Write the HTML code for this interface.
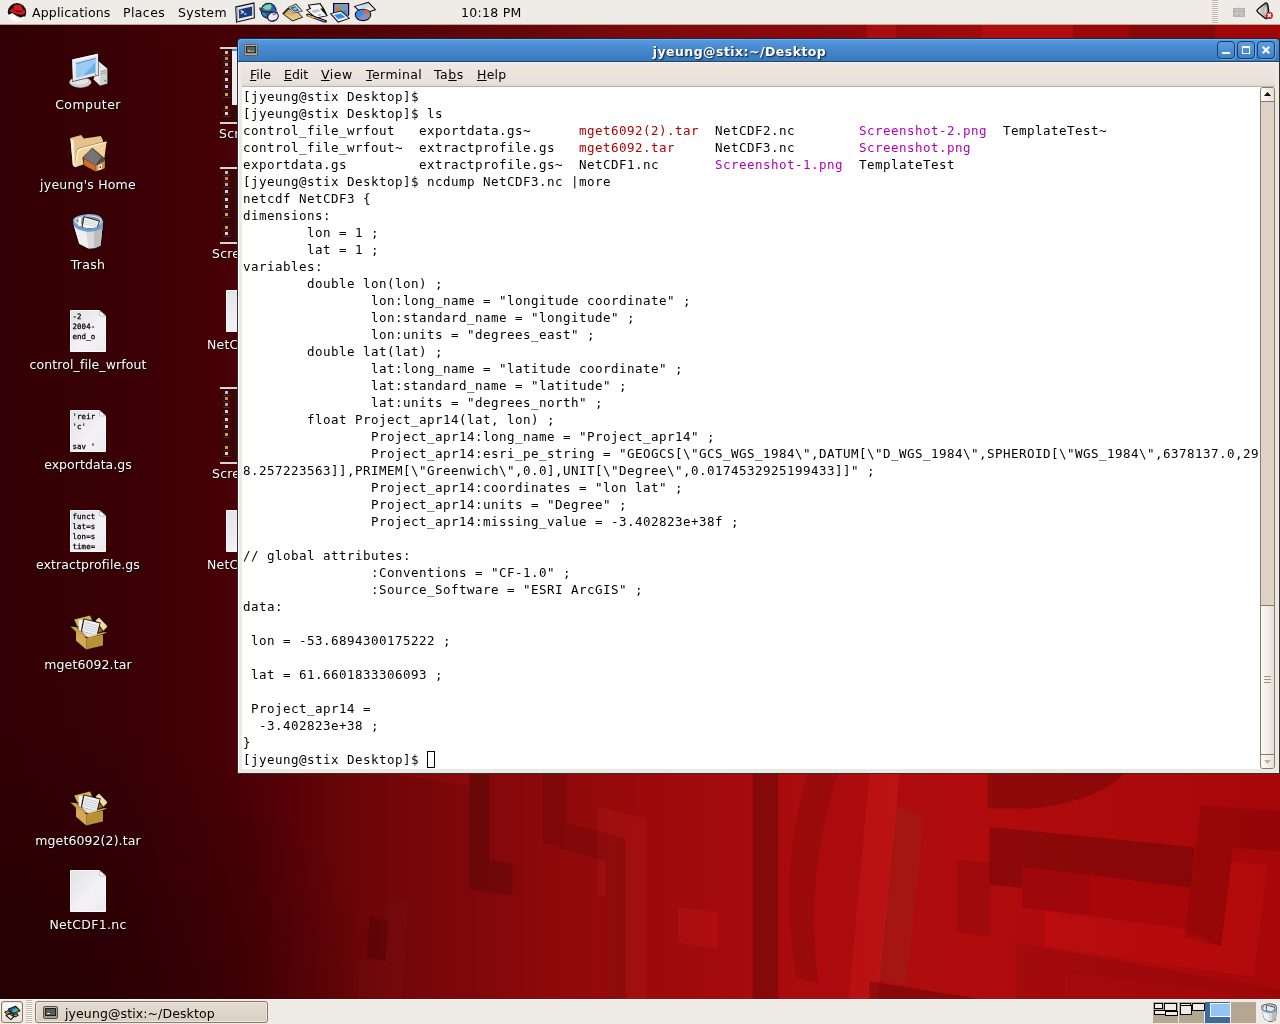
<!DOCTYPE html>
<html>
<head>
<meta charset="utf-8">
<title>jyeung@stix:~/Desktop</title>
<style>
html,body{margin:0;padding:0;}
body{width:1280px;height:1024px;overflow:hidden;position:relative;background:#7a0608;font-family:"DejaVu Sans","Liberation Sans",sans-serif;font-size:12.5px;color:#000;}
#wall{position:absolute;left:0;top:0;width:1280px;height:1024px;}
/* panels */
#top{position:absolute;left:0;top:0;width:1280px;height:24px;background:#efebe7;border-bottom:1px solid #b9a994;}
#bot{position:absolute;left:0;top:999px;width:1280px;height:25px;background:#efebe7;border-top:1px solid #fbfaf9;box-sizing:border-box;}
.pt{will-change:transform;position:absolute;top:5px;line-height:16px;white-space:nowrap;}
.tb{position:absolute;box-sizing:border-box;border:1px solid #8a7a66;border-radius:3px;background:linear-gradient(#e4dcd2,#dfd6ca 50%,#d9cfc2);box-shadow:inset 0 0 0 1px #ece6de;}
#grip{position:absolute;left:26px;top:0;width:6px;height:24px;background:repeating-linear-gradient(#c9baa6 0,#c9baa6 1px,#fbf9f7 1px,#fbf9f7 2px);}
#ws{position:absolute;left:1153px;top:2px;width:104px;height:21px;}
#ws i{position:absolute;display:block;box-sizing:border-box;}
#ws .wc{top:0;width:25px;height:21px;background:#b5a691;}
#ws .cur3{background:#3c6a9c;}
#ws .ww{background:#efebe7;border:1px solid #000;}
#ws .wa{background:#94c4f4;border:1px solid #fff;}
#grip2{position:absolute;left:1212px;top:0;width:6px;height:24px;background:repeating-linear-gradient(#c4b5a2 0,#c4b5a2 1px,#faf8f6 1px,#faf8f6 2px);}
/* desktop icons */
.lbl{will-change:transform;position:absolute;letter-spacing:0.2px;color:#fff;text-align:center;white-space:nowrap;line-height:16px;text-shadow:1px 1px 1px #000;transform:translateX(-50%);}
.ico{position:absolute;}
.l2{transform:none;text-align:left;}
.thumb{width:96px;height:77px;background:#3c0508;overflow:hidden;}
.thumb i{position:absolute;display:block;}
.thumb .tp{left:0;top:0;width:96px;height:2px;background:#d8d4cf;}
.thumb .bp{left:0;top:75px;width:96px;height:2px;background:#d8d4cf;}
.thumb .tw{left:12px;top:2px;width:80px;height:54px;background:#eeedf2;border-top:2px solid #4a86c8;}
.thumb .ti{left:5px;width:3px;height:3px;opacity:.9;}
.thumb .tl{left:3px;width:7px;height:1px;background:#fff;opacity:.13;}
/* window */
#win{position:absolute;left:237px;top:38px;width:1043px;height:736px;background:#ece9e4;box-sizing:border-box;border:1px solid #33302b;border-top:none;border-radius:5px 5px 0 0;}
#win:before{content:"";position:absolute;left:0;top:24px;width:1px;height:710px;background:#fff;}
#tbar{position:absolute;left:-1px;top:0;width:1043px;height:24px;box-sizing:border-box;border:1px solid #18283c;border-bottom:1px solid #1f426d;border-radius:4px 4px 0 0;background:linear-gradient(#5b9ce0 0%,#4b8dd3 30%,#4283c9 65%,#3a79bd 100%);box-shadow:inset 1px 1px 0 #6fb2f7;}
#ttl{will-change:transform;position:absolute;left:0;top:5px;width:1003px;text-align:center;color:#fff;font-weight:bold;font-size:12.5px;line-height:16px;letter-spacing:0.45px;text-shadow:1px 1px 0 #1c385c,1px 1px 2px #1c385c;}
.wb{position:absolute;top:2px;width:16px;height:16px;border:1px solid #1e3c62;border-radius:4px;background:linear-gradient(#5d9ee0,#4182c8);box-shadow:1px 1px 0 #64a4e8;}
.wb i{position:absolute;display:block;box-sizing:border-box;}
#menu{position:absolute;left:4px;top:24px;width:1033px;height:24px;border-bottom:1px solid #c2b29c;border-top:1px solid #fbf8f5;box-sizing:content-box;height:23px;background:linear-gradient(#ede7e4 0px,#ede6e3 5px,#eee4dc 6px,#ede3da 13px,#e5e3df 14px,#e5e3df 20px,#e5dcd0 21px,#e5dcd0 23px);}
.mi{will-change:transform;position:absolute;top:4px;line-height:16px;letter-spacing:0.25px;white-space:nowrap;}
.mi u{text-decoration:underline;text-underline-offset:1px;}
#term{position:absolute;left:4px;top:49px;width:1018px;height:682px;background:#fff;overflow:hidden;}
#term pre{will-change:transform;position:absolute;left:1px;top:1px;margin:0;font-family:"DejaVu Sans Mono","Liberation Mono",monospace;font-size:12.5px;letter-spacing:0.4744px;line-height:17px;color:#000;white-space:pre;}
.cur{display:inline-block;width:8px;height:17px;box-sizing:border-box;border:1px solid #000;vertical-align:top;letter-spacing:0;}
.r{color:#b00000;}
.m{color:#b000b8;}
#sb{position:absolute;left:1022px;top:49px;width:15px;height:682px;background:#ded3c6;border:1px solid #8a7a66;box-sizing:border-box;border-radius:3px;overflow:hidden;}
#sb .b{position:absolute;left:0;width:13px;height:13px;background:linear-gradient(90deg,#fdfbfa,#f1ece6 60%,#e6e0d8);}
#sb .th{position:absolute;left:0;top:517px;width:13px;height:150px;border-top:1px solid #8a7a66;border-bottom:1px solid #8a7a66;background:linear-gradient(90deg,#fbf9f7,#f2eeea 50%,#e4dfd7);box-sizing:border-box;}
</style>
</head>
<body>
<svg id="wall" width="1280" height="1024" viewBox="0 0 1280 1024">
<defs>
<linearGradient id="wg" x1="0" y1="0" x2="1280" y2="0" gradientUnits="userSpaceOnUse">
<stop offset="0" stop-color="#320004"/>
<stop offset="0.10" stop-color="#390005"/>
<stop offset="0.19" stop-color="#490006"/>
<stop offset="0.28" stop-color="#6c0507"/>
<stop offset="0.36" stop-color="#7e0709"/>
<stop offset="0.44" stop-color="#90090b"/>
<stop offset="0.52" stop-color="#9e0a0c"/>
<stop offset="0.62" stop-color="#aa0b0d"/>
<stop offset="0.75" stop-color="#b00c0e"/>
<stop offset="0.90" stop-color="#ac090b"/>
<stop offset="1" stop-color="#a60709"/>
</linearGradient>
<linearGradient id="tg" x1="0" y1="0" x2="1280" y2="0" gradientUnits="userSpaceOnUse">
<stop offset="0" stop-color="#300004"/>
<stop offset="0.19" stop-color="#460006"/>
<stop offset="0.31" stop-color="#530407"/>
<stop offset="0.42" stop-color="#680709"/>
<stop offset="0.50" stop-color="#7c0a0c"/>
<stop offset="0.60" stop-color="#88090b"/>
<stop offset="0.675" stop-color="#90090b"/>
<stop offset="0.70" stop-color="#960a0c"/>
<stop offset="0.77" stop-color="#a00a0c"/>
<stop offset="1" stop-color="#a00709"/>
</linearGradient>
<radialGradient id="vg" cx="60" cy="1060" r="340" gradientUnits="userSpaceOnUse">
<stop offset="0" stop-color="#000" stop-opacity="0.30"/>
<stop offset="0.45" stop-color="#000" stop-opacity="0.20"/>
<stop offset="1" stop-color="#000" stop-opacity="0"/>
</radialGradient>
</defs>
<rect x="0" y="0" width="1280" height="1024" fill="url(#wg)"/>
<rect x="0" y="700" width="420" height="324" fill="url(#vg)"/>
<rect x="0" y="24" width="1280" height="16" fill="url(#tg)"/>
<rect x="867" y="25" width="29" height="14" fill="#a80e10"/>
<rect x="982" y="25" width="91" height="14" fill="#b00d0f"/>
<rect x="1073" y="25" width="56" height="14" fill="#9c0709"/>
<rect x="1129" y="25" width="86" height="14" fill="#860808"/>
<rect x="1215" y="25" width="65" height="14" fill="#a00709"/>
<polygon points="396.4,770.0 469.5,770.0 469.5,785.4 396.4,774.9" fill="#ff3020" fill-opacity="0.08"/>
<polygon points="469.5,770.0 489.8,770.0 489.8,860.2 512.2,863.4 512.2,895.1 469.5,889.8" fill="#1a0800" fill-opacity="0.2"/>
<polygon points="597.5,806.6 646.2,818.8 646.2,1001.6 605.6,1001.6 605.6,895.9 597.5,895.9" fill="#ff5030" fill-opacity="0.07"/>
<polygon points="542.7,770.0 567.0,770.0 567.0,822.8 625.9,839.1 625.9,1001.6 605.6,1001.6 605.6,861.4 542.7,843.1" fill="#000000" fill-opacity="0.1"/>
<polygon points="677.9,907.3 717.3,912.2 717.3,948.8 677.9,942.7" fill="#ff3030" fill-opacity="0.13"/>
<polygon points="370.0,916.2 388.3,921.1 385.4,960.9 366.8,956.9" fill="#000000" fill-opacity="0.14"/>
<polygon points="388.3,895.9 408.6,898.0 402.5,997.5 357.8,997.5 359.8,960.9 386.2,960.9" fill="#ffffff" fill-opacity="0.015"/>
<polygon points="752.7,770.0 778.3,770.0 778.3,1001.6 752.7,1001.6" fill="#000000" fill-opacity="0.2"/>
<path d="M808.8,770.0 Q776.2,875.6 796.6,977.2 L818.9,983.3 Q802.7,875.6 839.2,770.0 Z" fill="#000" fill-opacity="0.09"/>
<polygon points="869.7,770.0 900.2,770.0 877.8,1001.6 848.6,1001.6" fill="#ff3030" fill-opacity="0.16"/>
<polygon points="896.1,806.6 924.5,814.7 906.2,985.3 877.8,979.2" fill="#804020" fill-opacity="0.18"/>
<polygon points="869.7,981.2 975.3,998.3 975.3,1001.6 869.7,1001.6" fill="#000000" fill-opacity="0.22"/>
<path d="M987.5,770.0 L987.5,808.6 L1036.2,808.6 Q1105.3,798.4 1127.7,770.0 Z" fill="#000" fill-opacity="0.18"/>
<polygon points="1015.9,942.7 1280.0,989.4 1280.0,1001.6 1015.9,1001.6" fill="#000000" fill-opacity="0.07"/>
<polygon points="1064.7,973.1 1280.0,997.5 1280.0,1001.6 1064.7,1001.6" fill="#ff3030" fill-opacity="0.05"/>
<polygon points="989.5,826.9 1194.7,847.2 1190.6,887.8 1022.0,887.8 989.5,885.0" fill="#000000" fill-opacity="0.2"/>
<polygon points="956.2,859.4 990.3,862.6 990.3,936.6 956.2,932.5" fill="#000000" fill-opacity="0.09"/>
<polygon points="1022.0,866.7 1089.1,874.8 1089.1,915.4 1022.0,908.1" fill="#a0070c" fill-opacity="1"/>
<polygon points="1089.1,874.8 1190.6,887.8 1186.6,928.4 1089.1,915.4" fill="#a80709" fill-opacity="1"/>
<polygon points="1044.4,910.2 1184.5,929.2 1221.1,946.7 1231.2,861.4 1267.8,865.5 1253.6,976.4 1044.4,946.7" fill="#ff2020" fill-opacity="0.13"/>
<polygon points="1200.8,805.8 1280.0,810.6 1280.0,851.2 1233.3,848.0 1221.1,946.7 1184.5,937.4" fill="#000000" fill-opacity="0.1"/>
</svg>
<div id="desk">
<svg class="ico" style="left:64px;top:48px" width="48" height="48" viewBox="0 0 48 48">
<ellipse cx="16.5" cy="35" rx="11.5" ry="5.8" fill="#1a0a0a" opacity=".6"/>
<ellipse cx="16.3" cy="34.3" rx="11" ry="5.4" fill="#cfcfd1"/>
<ellipse cx="15.5" cy="33" rx="9" ry="3.6" fill="#e4e4e6"/>
<path d="M29 31.5 L35.5 38.5 L43.8 36.3 L43.8 20.2 L35.3 11.5 L33 13 Z" fill="#111" opacity=".7"/>
<path d="M34.3 13 L43.2 20.6 L43.2 35.6 L36 37.6 L29.5 31.5 Z" fill="#e9e9ea"/>
<path d="M36 22.5 L43.2 20.6 L43.2 35.6 L36 37.6 Z" fill="#d0d0d2"/>
<path d="M36.8 24 L42.5 22.5 M36.8 26 L42.5 24.5" stroke="#9a9a9c" stroke-width=".8"/>
<circle cx="41.3" cy="32.8" r="1" fill="#3cae3c"/>
<path d="M7.5 11 L34.6 4.8 L35 27.6 L8.3 34 Z" fill="#111" opacity=".75"/>
<path d="M8.3 11.6 L34 5.8 L34.3 27 L9 33 Z" fill="#e6e6e8"/>
<path d="M8.3 11.6 L34 5.8 L34 7.4 L9.6 13 L10 32.8 L9 33 Z" fill="#f8f8f9"/>
<path d="M12.2 15.6 L31.5 10.4 L31.6 24.6 L12.5 29.8 Z" fill="#6aaee8"/>
<path d="M12.2 15.6 L31.5 10.4 L31.5 14 L18 29 L12.5 29.8 Z" fill="#a5d2f5" opacity=".8"/>
<path d="M12.2 15.6 L31.5 10.4" stroke="#3c78b8" stroke-width=".8"/>
<circle cx="31.4" cy="26.3" r=".8" fill="#3cae3c"/>
</svg>
<svg class="ico" style="left:64px;top:128px" width="48" height="48" viewBox="0 0 48 48">
<path d="M5.5 9.5 L17.5 6 L20.2 9.5 L37.5 7 L39.8 12 L40 30 L10.8 40.2 L8 37.5 Z" fill="#1a0808" opacity=".8"/>
<path d="M6.4 10 L17.2 7 L19.8 10.4 L37 7.9 L39 12.4 L39 29 L11 39.2 L8.8 37 Z" fill="#e6c189"/>
<path d="M6.4 10 L8.8 37 L11 39.2 L9.5 12 Z" fill="#fbf0dc"/>
<path d="M11 39.2 L12.2 24 Q12.6 20.6 15.5 19.8 L43.3 12.6 L41 30.4 Z" fill="#1a0808" opacity=".35"/>
<path d="M11.2 39 L12.8 24.4 Q13.2 21.4 16 20.6 L42.6 13.4 L40.4 30 Z" fill="#f2d29b"/>
<path d="M11.2 39 L12.8 24.4 Q13.2 21.4 16 20.6 L42.6 13.4 L42.4 14.6 L16.6 21.8 Q14.2 22.6 13.9 25 L12.4 38.6 Z" fill="#fff6e6"/>
<g transform="translate(-1.6,-3.8)"><path d="M20 33.2 L30 23.6 L43.6 35.4 L43 44.6 L33.2 48 L21.2 41.4 Z" fill="#180808" opacity=".8"/>
<path d="M21.6 34.6 L33.2 41.2 L33.2 47.2 L21.8 41 Z" fill="#cf6d2a"/>
<path d="M33.2 41.2 L42.6 36 L42.4 44 L33.2 47.2 Z" fill="#e08843"/>
<path d="M20.6 33.2 L30 24.4 L39.5 32.6 L33.2 41.4 Z" fill="#757575"/>
<path d="M30 24.4 L43.2 35.6 L42.8 36.6 L33.2 41.4 L39 33 Z" fill="#4c4c4c"/>
<path d="M36 41.4 L39.6 39.8 L39.6 44.8 L36 46.2 Z" fill="#f4f4f4"/>
<rect x="37.3" y="42" width="1.2" height="2" fill="#222"/></g>
</svg>
<svg class="ico" style="left:64px;top:208px" width="48" height="48" viewBox="0 0 48 48">
<path d="M8.2 12 Q8 7 24 5 Q39 4.4 40 13 L37.6 38 Q30 42.6 24 41.6 L14.4 36.6 Z" fill="#140808" opacity=".8"/>
<path d="M10 18 L15.2 35.8 L24.4 40.6 Q30 41.2 36.6 37.4 L38.6 18 Z" fill="#d9d9db"/>
<path d="M10 18 L15.2 35.8 L24.4 40.6 L22 20 Z" fill="#efeff0"/>
<path d="M30 21 L38.6 18 L36.6 37.4 Q33 39.6 30 40.4 Z" fill="#bdbdc0"/>
<path d="M9 12.4 Q9 7.6 24 6 Q38 5.6 39.2 13.4 L38.8 19.6 Q32 24.4 22 23.4 Q12 21.6 9.8 17.6 Z" fill="#7ea6d2"/>
<path d="M10.4 12.4 Q11 8.8 24 7.4 Q36.6 7.2 37.8 13.2 Q37 17.6 24 18.8 Q12 17.6 10.4 12.4 Z" fill="#e8e8ea"/>
<path d="M11.6 12.6 Q13 9.6 24 8.6 Q35.6 8.6 36.6 13.2 Q35 16.4 24 17.6 Q13.6 16.6 11.6 12.6 Z" fill="#8a8a8e"/>
<path d="M14.6 10 L17.6 9.6 L16.6 18.4 L14 17.4 Z" fill="#fafafa"/>
<path d="M19.6 8 L36 13 L33.4 19.6 Q26 21.4 17.6 19.4 Z" fill="#1a1a1a"/>
<path d="M20.4 9.2 L35 13.6 L32.6 19.4 Q26 20.8 18.6 19.2 Z" fill="#f6f6f7"/>
<path d="M21 12 L33 15 M20.4 14 L32.4 16.8 M20 16 L31.6 18.4" stroke="#c6c6ca" stroke-width=".7"/>
<path d="M9.8 17.6 Q12 21.6 22 23.4 Q32 24.4 38.8 19.6 L39 16.6 Q32 21 22 20.4 Q12 18.6 9.4 14.6 Z" fill="#6f9bcb"/>
</svg>
<svg class="ico" style="left:70px;top:310px;will-change:transform" width="37" height="43" viewBox="0 0 37 43">
<path d="M0.5 0.5 L30 0.5 L36.5 6.5 L36.5 42.5 L0.5 42.5 Z" fill="#2a1010" opacity=".55"/>
<defs><linearGradient id="dga" x1="0" y1="0" x2="1" y2="1"><stop offset="0" stop-color="#e2e1e3"/><stop offset=".6" stop-color="#f4f2f5"/><stop offset="1" stop-color="#ebeaec"/></linearGradient></defs>
<path d="M0.5 0.5 L29.5 0.5 L35.5 6 L35.5 41.5 L0.5 41.5 Z" fill="url(#dga)" stroke="#fbfbfb" stroke-width="1"/>
<path d="M29.5 0.5 L29.5 6 L35.5 6 Z" fill="#fdfdfd" stroke="#b9b9bb" stroke-width=".8"/>
<g font-family="DejaVu Sans Mono, Liberation Mono, monospace" font-size="7.4" fill="#000" letter-spacing=".15" stroke="#000" stroke-width=".25"><text x="2.4" y="9.2">-2</text><text x="2.4" y="19.2">2004-</text><text x="2.4" y="29.2">end_o</text></g>
</svg>
<svg class="ico" style="left:70px;top:410px;will-change:transform" width="37" height="43" viewBox="0 0 37 43">
<path d="M0.5 0.5 L30 0.5 L36.5 6.5 L36.5 42.5 L0.5 42.5 Z" fill="#2a1010" opacity=".55"/>
<defs><linearGradient id="dgb" x1="0" y1="0" x2="1" y2="1"><stop offset="0" stop-color="#e2e1e3"/><stop offset=".6" stop-color="#f4f2f5"/><stop offset="1" stop-color="#ebeaec"/></linearGradient></defs>
<path d="M0.5 0.5 L29.5 0.5 L35.5 6 L35.5 41.5 L0.5 41.5 Z" fill="url(#dgb)" stroke="#fbfbfb" stroke-width="1"/>
<path d="M29.5 0.5 L29.5 6 L35.5 6 Z" fill="#fdfdfd" stroke="#b9b9bb" stroke-width=".8"/>
<g font-family="DejaVu Sans Mono, Liberation Mono, monospace" font-size="7.4" fill="#000" letter-spacing=".15" stroke="#000" stroke-width=".25"><text x="2.4" y="9.2">&#39;reir</text><text x="2.4" y="19.2">&#39;c&#39;</text><text x="2.4" y="39.2">sav &#39;</text></g>
</svg>
<svg class="ico" style="left:70px;top:510px;will-change:transform" width="37" height="43" viewBox="0 0 37 43">
<path d="M0.5 0.5 L30 0.5 L36.5 6.5 L36.5 42.5 L0.5 42.5 Z" fill="#2a1010" opacity=".55"/>
<defs><linearGradient id="dgc" x1="0" y1="0" x2="1" y2="1"><stop offset="0" stop-color="#e2e1e3"/><stop offset=".6" stop-color="#f4f2f5"/><stop offset="1" stop-color="#ebeaec"/></linearGradient></defs>
<path d="M0.5 0.5 L29.5 0.5 L35.5 6 L35.5 41.5 L0.5 41.5 Z" fill="url(#dgc)" stroke="#fbfbfb" stroke-width="1"/>
<path d="M29.5 0.5 L29.5 6 L35.5 6 Z" fill="#fdfdfd" stroke="#b9b9bb" stroke-width=".8"/>
<g font-family="DejaVu Sans Mono, Liberation Mono, monospace" font-size="7.4" fill="#000" letter-spacing=".15" stroke="#000" stroke-width=".25"><text x="2.4" y="9.2">funct</text><text x="2.4" y="19.2">lat=s</text><text x="2.4" y="29.2">lon=s</text><text x="2.4" y="39.2">time=</text></g>
</svg>
<svg class="ico" style="left:59px;top:605px" width="48" height="48" viewBox="0 0 48 48">
<path d="M10.4 20.6 L14.6 14 L31.4 9.4 L33.6 14 L40 11 L49.6 21.6 L45 26.4 L50 27.4 L44.6 30 L44.6 41.4 L27 45.6 L16.4 36.4 L16.4 27 Z" fill="#140606" opacity=".8"/>
<path d="M15.2 14.6 L31 10.4 L33 15 L18.4 21.6 Z" fill="#d6ad5c"/>
<path d="M36.6 15.4 L40 12.4 L48.6 21.4 L44.4 25.8 Z" fill="#f4d9a0"/>
<path d="M18 22 L33 15 L44 26 L28 32 Z" fill="#8a6a28"/>
<path d="M19.8 15 L23.4 14.6 L22 27 L19.6 25 Z" fill="#f4f4f5"/>
<path d="M24.6 13.4 L41.6 17.4 L38.4 30.4 L22 26.4 Z" fill="#161616"/>
<path d="M25.4 14.6 L40.6 18.2 L37.6 30 L23 26.2 Z" fill="#f2f2f4"/>
<path d="M26 17.6 L39 20.8 M25.6 19.8 L38.4 23 M25 22 L38 25.2 M24.4 24.2 L37.4 27.4" stroke="#c2c2c8" stroke-width=".8"/>
<path d="M11.4 21.4 L17 22 L28.4 31.6 L22.4 32 Z" fill="#c79f46"/>
<path d="M17 26.6 L27.2 33 L27.2 44.6 L17 35.8 Z" fill="#d4aa52"/>
<path d="M27.2 33 L44 29.4 L44 40.6 L27.2 44.6 Z" fill="#b7913a"/>
<path d="M27.2 31.8 L44.6 27.2 L49 27.6 L30 32.8 Z" fill="#dcb660"/>
<path d="M23 26.2 L37.6 30 L28 32 Z" fill="#e2e2e6"/>
</svg>
<svg class="ico" style="left:59px;top:781px" width="48" height="48" viewBox="0 0 48 48">
<path d="M10.4 20.6 L14.6 14 L31.4 9.4 L33.6 14 L40 11 L49.6 21.6 L45 26.4 L50 27.4 L44.6 30 L44.6 41.4 L27 45.6 L16.4 36.4 L16.4 27 Z" fill="#140606" opacity=".8"/>
<path d="M15.2 14.6 L31 10.4 L33 15 L18.4 21.6 Z" fill="#d6ad5c"/>
<path d="M36.6 15.4 L40 12.4 L48.6 21.4 L44.4 25.8 Z" fill="#f4d9a0"/>
<path d="M18 22 L33 15 L44 26 L28 32 Z" fill="#8a6a28"/>
<path d="M19.8 15 L23.4 14.6 L22 27 L19.6 25 Z" fill="#f4f4f5"/>
<path d="M24.6 13.4 L41.6 17.4 L38.4 30.4 L22 26.4 Z" fill="#161616"/>
<path d="M25.4 14.6 L40.6 18.2 L37.6 30 L23 26.2 Z" fill="#f2f2f4"/>
<path d="M26 17.6 L39 20.8 M25.6 19.8 L38.4 23 M25 22 L38 25.2 M24.4 24.2 L37.4 27.4" stroke="#c2c2c8" stroke-width=".8"/>
<path d="M11.4 21.4 L17 22 L28.4 31.6 L22.4 32 Z" fill="#c79f46"/>
<path d="M17 26.6 L27.2 33 L27.2 44.6 L17 35.8 Z" fill="#d4aa52"/>
<path d="M27.2 33 L44 29.4 L44 40.6 L27.2 44.6 Z" fill="#b7913a"/>
<path d="M27.2 31.8 L44.6 27.2 L49 27.6 L30 32.8 Z" fill="#dcb660"/>
<path d="M23 26.2 L37.6 30 L28 32 Z" fill="#e2e2e6"/>
</svg>
<svg class="ico" style="left:70px;top:870px;will-change:transform" width="37" height="43" viewBox="0 0 37 43">
<path d="M0.5 0.5 L30 0.5 L36.5 6.5 L36.5 42.5 L0.5 42.5 Z" fill="#2a1010" opacity=".55"/>
<defs><linearGradient id="dgd" x1="0" y1="0" x2="1" y2="1"><stop offset="0" stop-color="#e2e1e3"/><stop offset=".6" stop-color="#f4f2f5"/><stop offset="1" stop-color="#ebeaec"/></linearGradient></defs>
<path d="M0.5 0.5 L29.5 0.5 L35.5 6 L35.5 41.5 L0.5 41.5 Z" fill="url(#dgd)" stroke="#fbfbfb" stroke-width="1"/>
<path d="M29.5 0.5 L29.5 6 L35.5 6 Z" fill="#fdfdfd" stroke="#b9b9bb" stroke-width=".8"/>
<g font-family="DejaVu Sans Mono, Liberation Mono, monospace" font-size="7.4" fill="#000" letter-spacing=".15" stroke="#000" stroke-width=".25"></g>
</svg>
<div class="lbl" style="left:88px;top:97px;letter-spacing:0.45px">Computer</div>
<div class="lbl" style="left:88px;top:177px;letter-spacing:0.2px">jyeung&#39;s Home</div>
<div class="lbl" style="left:88px;top:257px;letter-spacing:0.3px">Trash</div>
<div class="lbl" style="left:88px;top:357px;letter-spacing:0.1px">control_file_wrfout</div>
<div class="lbl" style="left:88px;top:457px;letter-spacing:0.05px">exportdata.gs</div>
<div class="lbl" style="left:88px;top:557px;letter-spacing:0.1px">extractprofile.gs</div>
<div class="lbl" style="left:88px;top:657px;letter-spacing:0.1px">mget6092.tar</div>
<div class="lbl" style="left:88px;top:833px;letter-spacing:0.1px">mget6092(2).tar</div>
<div class="lbl" style="left:88px;top:917px;letter-spacing:0.3px">NetCDF1.nc</div>
<div class="ico thumb" style="left:220px;top:47px"><i class="tp"></i><i class="bp"></i><i class="tw"></i><i class="ti" style="top:4px;background:#c4d8ec"></i><i class="tl" style="top:8px"></i><i class="ti" style="top:10px;background:#d89858"></i><i class="tl" style="top:14px"></i><i class="ti" style="top:16px;background:#b4bcc8"></i><i class="tl" style="top:20px"></i><i class="ti" style="top:23px;background:#e4e4e8"></i><i class="tl" style="top:27px"></i><i class="ti" style="top:31px;background:#ececf0"></i><i class="tl" style="top:35px"></i><i class="ti" style="top:38px;background:#e4e4e8"></i><i class="tl" style="top:42px"></i><i class="ti" style="top:46px;background:#d8b050"></i><i class="tl" style="top:50px"></i><i class="ti" style="top:59px;background:#d8b050"></i><i class="tl" style="top:63px"></i><i class="ti" style="top:65px;background:#ececf0"></i><i class="tl" style="top:69px"></i></div>
<div class="ico thumb" style="left:220px;top:167px"><i class="tp"></i><i class="bp"></i><i class="ti" style="top:4px;background:#c4d8ec"></i><i class="tl" style="top:8px"></i><i class="ti" style="top:10px;background:#d89858"></i><i class="tl" style="top:14px"></i><i class="ti" style="top:16px;background:#b4bcc8"></i><i class="tl" style="top:20px"></i><i class="ti" style="top:23px;background:#e4e4e8"></i><i class="tl" style="top:27px"></i><i class="ti" style="top:31px;background:#ececf0"></i><i class="tl" style="top:35px"></i><i class="ti" style="top:38px;background:#e4e4e8"></i><i class="tl" style="top:42px"></i><i class="ti" style="top:46px;background:#d8b050"></i><i class="tl" style="top:50px"></i><i class="ti" style="top:59px;background:#d8b050"></i><i class="tl" style="top:63px"></i><i class="ti" style="top:65px;background:#ececf0"></i><i class="tl" style="top:69px"></i></div>
<div class="ico thumb" style="left:220px;top:387px"><i class="tp"></i><i class="bp"></i><i class="ti" style="top:4px;background:#c4d8ec"></i><i class="tl" style="top:8px"></i><i class="ti" style="top:10px;background:#d89858"></i><i class="tl" style="top:14px"></i><i class="ti" style="top:16px;background:#b4bcc8"></i><i class="tl" style="top:20px"></i><i class="ti" style="top:23px;background:#e4e4e8"></i><i class="tl" style="top:27px"></i><i class="ti" style="top:31px;background:#ececf0"></i><i class="tl" style="top:35px"></i><i class="ti" style="top:38px;background:#e4e4e8"></i><i class="tl" style="top:42px"></i><i class="ti" style="top:46px;background:#d8b050"></i><i class="tl" style="top:50px"></i><i class="ti" style="top:59px;background:#d8b050"></i><i class="tl" style="top:63px"></i><i class="ti" style="top:65px;background:#ececf0"></i><i class="tl" style="top:69px"></i></div>
<svg class="ico" style="left:226px;top:290px;will-change:transform" width="37" height="43" viewBox="0 0 37 43">
<path d="M0.5 0.5 L30 0.5 L36.5 6.5 L36.5 42.5 L0.5 42.5 Z" fill="#2a1010" opacity=".55"/>
<defs><linearGradient id="dge" x1="0" y1="0" x2="1" y2="1"><stop offset="0" stop-color="#e2e1e3"/><stop offset=".6" stop-color="#f4f2f5"/><stop offset="1" stop-color="#ebeaec"/></linearGradient></defs>
<path d="M0.5 0.5 L29.5 0.5 L35.5 6 L35.5 41.5 L0.5 41.5 Z" fill="url(#dge)" stroke="#fbfbfb" stroke-width="1"/>
<path d="M29.5 0.5 L29.5 6 L35.5 6 Z" fill="#fdfdfd" stroke="#b9b9bb" stroke-width=".8"/>
<g font-family="DejaVu Sans Mono, Liberation Mono, monospace" font-size="7.4" fill="#000" letter-spacing=".15" stroke="#000" stroke-width=".25"></g>
</svg>
<svg class="ico" style="left:226px;top:510px;will-change:transform" width="37" height="43" viewBox="0 0 37 43">
<path d="M0.5 0.5 L30 0.5 L36.5 6.5 L36.5 42.5 L0.5 42.5 Z" fill="#2a1010" opacity=".55"/>
<defs><linearGradient id="dgf" x1="0" y1="0" x2="1" y2="1"><stop offset="0" stop-color="#e2e1e3"/><stop offset=".6" stop-color="#f4f2f5"/><stop offset="1" stop-color="#ebeaec"/></linearGradient></defs>
<path d="M0.5 0.5 L29.5 0.5 L35.5 6 L35.5 41.5 L0.5 41.5 Z" fill="url(#dgf)" stroke="#fbfbfb" stroke-width="1"/>
<path d="M29.5 0.5 L29.5 6 L35.5 6 Z" fill="#fdfdfd" stroke="#b9b9bb" stroke-width=".8"/>
<g font-family="DejaVu Sans Mono, Liberation Mono, monospace" font-size="7.4" fill="#000" letter-spacing=".15" stroke="#000" stroke-width=".25"></g>
</svg>
<div class="lbl l2" style="left:219px;top:126px">Screenshot.png</div>
<div class="lbl l2" style="left:212px;top:246px">Screenshot-1.png</div>
<div class="lbl l2" style="left:207px;top:337px">NetCDF2.nc</div>
<div class="lbl l2" style="left:212px;top:466px">Screenshot-2.png</div>
<div class="lbl l2" style="left:207px;top:557px">NetCDF3.nc</div>
</div>
<!--/desk-->
<div id="top">
<svg class="ico" style="left:7px;top:2px" width="20" height="21" viewBox="0 0 20 21"><defs><clipPath id="lc"><circle cx="10" cy="10.3" r="9.2"/></clipPath></defs><circle cx="10" cy="10.3" r="9.2" fill="#fdfdfd"/><g clip-path="url(#lc)"><path d="M0 0 H20 V14.8 L16.4 14.6 L13.6 15.4 L9 13.4 L5.2 11 L2.4 12.4 L0 12.6 Z" fill="#0c0c0c"/><path d="M2.8 8.6 C3.6 7.4 5.2 6.8 6.2 6.6 C6.4 4.8 7.2 2.6 8.8 2.4 C10 2.4 10.6 3 11.6 3 C12.4 3 13 2.6 13.8 3 C14.8 3.6 15.4 6 15.8 7.4 C17.4 7.8 18.4 8.8 18.2 10.4 C18 12.2 15.2 13 12 12.6 C8.8 12.2 6.6 11 5.6 10.2 C4 10.6 2 10 2.8 8.6 Z" fill="#d4191f"/><path d="M6.6 7 C8.6 8.6 12.4 9.4 15.2 8.6 L15.4 9.6 C12.6 10.6 8.6 9.8 6.4 8 Z" fill="#3c0808"/><path d="M9.4 14 L11.4 14.8 L10.4 15.6 Z M12.4 15.6 L13.8 15.4 L12.6 17 Z" fill="#777"/></g></svg>
<span class="pt" style="left:32px;letter-spacing:.18px">Applications</span>
<span class="pt" style="left:123px;letter-spacing:.4px">Places</span>
<span class="pt" style="left:178px;letter-spacing:.4px">System</span>
<svg class="ico" style="left:230px;top:0" width="150" height="25" viewBox="230 0 150 25">
<!-- terminal -->
<path d="M235.2 6.4 L254.5 2.3 L254.9 18.3 L236 22.8 Z" fill="#0a0a0a"/>
<path d="M236.4 7.4 L253.5 3.7 L253.8 17.4 L237 21.4 Z" fill="#e8e8ea"/>
<path d="M236.4 7.4 L237 21.4 L238.2 21.1 L237.8 8.2 Z" fill="#a8a8ac"/>
<path d="M238.8 9.5 L252.1 6.5 L252.2 15.4 L239.1 18.5 Z" fill="#1a3a82"/>
<path d="M240.6 10.6 L243.4 12 L240.8 13.6 M244 14.2 L246.4 13.7" stroke="#fff" stroke-width="1.1" fill="none"/>
<!-- globe + mouse -->
<circle cx="268.6" cy="10.8" r="8" fill="#0a0a0a"/>
<circle cx="268.6" cy="10.8" r="7.2" fill="#1a62cc"/>
<path d="M262.5 7.4 Q266 3.6 270.8 4.4 Q272.6 7 270 9.6 Q266 11 262.5 7.4 Z" fill="#86d494"/>
<path d="M262 13 Q265 13.4 266.6 16 Q264 16.4 262 13 Z" fill="#58b85c"/>
<path d="M260 7.6 Q259.4 11.4 268 11.6 Q276 11.4 277.4 13" stroke="#222" stroke-width="1.6" fill="none"/>
<path d="M260.4 7.2 Q260 10.6 268 10.8 Q276 10.6 277.8 12.4" stroke="#9a9a9a" stroke-width=".6" fill="none"/>
<ellipse cx="273" cy="16.8" rx="6" ry="4.8" fill="#0a0a0a" transform="rotate(-22 273 16.8)"/>
<ellipse cx="273" cy="16.6" rx="5" ry="3.8" fill="#ececf4" transform="rotate(-22 273 16.6)"/>
<path d="M272 13.6 L276 13 L276 15 L273 15.6 Z" fill="#8a8ad0"/>
<!-- mail -->
<path d="M282.2 13.6 L288.5 7 L296 3.6 L303 11.2 L298.2 12.4 L303 17.4 L292.4 21.4 Z" fill="#0a0a0a" opacity=".85"/>
<path d="M283.4 13.8 L288.6 8.6 L297.4 12.6 L302 17 L292.5 20.4 Z" fill="#d8ae6c" stroke="#111" stroke-width="1.1" stroke-linejoin="round"/>
<path d="M283.4 13.8 L292.6 15.8 L297.4 12.6 L302 17 L292.5 20.4 Z" fill="#e6c284"/>
<path d="M288.4 7.2 L295.8 4.6 L302 11 L294 12.8 Z" fill="#f4f4f4" stroke="#555" stroke-width=".7"/>
<path d="M290 7.6 L295.2 6 L299.4 10.4 L294.2 11.8 Z" fill="#2a5cb0"/>
<ellipse cx="295" cy="8.8" rx="2" ry="1.4" fill="#8ad49a"/>
<!-- writer -->
<path d="M307.8 4.8 L320.4 3 L324.4 9 L327.8 16 L315.6 18.6 L305.8 9.8 L309.4 8.4 Z" fill="#0a0a0a"/>
<path d="M309.2 5.6 L319.8 4.2 L322.6 8.4 L311.6 9.6 Z" fill="#f6f6f6"/>
<path d="M307.4 10 L318.6 7 L326.4 15.4 L316 17.6 Z" fill="#fafafa"/>
<path d="M311 10.6 L318 9 L320.6 11.6 L313.6 13.2 Z" fill="#c2c2c4"/>
<path d="M318 15.2 L321 14.6" stroke="#3a8af0" stroke-width="1"/>
<path d="M306.2 14 L308 13.4 L327 20.4 L326.6 22.4 L324 22.4 L306.6 16 Z" fill="#0a0a0a"/>
<path d="M307.4 14.6 L325.8 21.2 L324.4 21.6 L307.4 15.6 Z" fill="#c8d4f4"/>
<path d="M308 14.8 L314.6 17.2 L314 18.4 L307.6 16 Z" fill="#e8b020"/>
<!-- impress -->
<rect x="333" y="3" width="16.2" height="12.6" fill="#0a0a0a"/>
<rect x="334.2" y="4" width="13.8" height="11" fill="#8e8ecc"/>
<rect x="336.8" y="7.2" width="3" height="4.6" fill="#f06a2c"/>
<rect x="340" y="5.2" width="3" height="6" fill="#4ec46a"/>
<path d="M343.6 10 L346.4 11 L346.4 14 L343.6 13 Z" fill="#2a8af0"/>
<path d="M329.8 13.4 L341.4 10.4 L350.2 18.4 L338 22.8 Z" fill="#0a0a0a"/>
<path d="M331.4 13.8 L341 11.4 L348.6 18.2 L338.4 21.6 Z" fill="#ececec"/>
<path d="M334 15 L341 13.4 L345.2 17.2 L338.2 19 Z" fill="#2a8af0"/>
<!-- calc -->
<path d="M353.6 6.2 L368.6 1.8 L376.4 10 L370 12 L358 10.6 Z" fill="#0a0a0a"/>
<path d="M355.4 6.6 L368.2 3 L374.6 9.6 L369.6 11 L358.6 9.4 Z" fill="#ebebed"/>
<path d="M359 6.8 L368 4.4 M360.4 8.2 L370 5.8" stroke="#a6d0ec" stroke-width=".9"/>
<ellipse cx="363" cy="15" rx="8.2" ry="6.2" fill="#0a0a0a"/>
<ellipse cx="363" cy="14.8" rx="7.2" ry="5.2" fill="#3a8cec"/>
<path d="M363 14.8 L364.4 9.8 Q368.6 10.2 369.8 12.8 Z" fill="#f0642c"/>
<path d="M363 14.8 L369.8 12.8 Q370.2 13.8 370.2 14.6 Z" fill="#4ec46a"/>
<path d="M363 14.8 L370.2 14.6 Q370 19.4 363.4 20 Q359.6 19.8 358 18.4 Z" fill="#8c8cc8"/>
</svg>
<div id="grip2"></div>
<svg class="ico" style="left:1232px;top:5px" width="14" height="14" viewBox="0 0 14 14"><path d="M4 1.8 H9" stroke="#dcd9d5" stroke-width="1"/><rect x="1" y="3" width="12" height="9" fill="#b2b2b2"/><rect x="2" y="4" width="10" height="1" fill="#c4c4c4"/><rect x="3" y="5.5" width="5" height="2" fill="#bdbdbd"/><rect x="8.6" y="5.5" width="2.4" height="2" fill="#c6c8a0"/><rect x="2" y="8" width="10" height="1" fill="#d0d0d0"/><rect x="3.6" y="9.6" width="2.6" height="1.4" fill="#c8c8c8"/><rect x="8" y="9.6" width="2.6" height="1.4" fill="#c8c8c8"/></svg>
<svg class="ico" style="left:1254px;top:1px" width="22" height="22" viewBox="0 0 22 22"><defs><linearGradient id="spk" x1="0" y1="0" x2="1" y2="0"><stop offset="0" stop-color="#f2f2f2"/><stop offset=".55" stop-color="#bcbcbc"/><stop offset="1" stop-color="#6a6a6a"/></linearGradient></defs><path d="M2.8 9.6 Q3 8.4 11.2 2.2 Q13 1.4 13.8 4 Q15.6 10 13.8 16 Q13 18.2 11.4 17.4 Q3.2 11.2 2.8 9.6 Z" fill="url(#spk)" stroke="#0c0c0c" stroke-width="1.3" stroke-linejoin="round"/><ellipse cx="11.6" cy="9.8" rx="1.3" ry="4.6" fill="#ddd" opacity=".8"/><circle cx="15.4" cy="14.4" r="3.5" fill="#c81414"/><circle cx="15" cy="13.8" r="2.4" fill="#e23a30" opacity=".7"/><path d="M13.8 12.8 L17 16 M17 12.8 L13.8 16" stroke="#fff" stroke-width="1.3"/></svg>
<span class="pt" id="clock" style="left:461px;letter-spacing:.28px">10:18 PM</span>
</div>
<div id="bot">
<div class="tb" style="left:1px;top:1px;width:22px;height:22px;background:linear-gradient(#fefdfc,#f3eeea 50%,#e9e1da)"><svg style="position:absolute;left:0;top:0" width="20" height="20" viewBox="2 1002 20 20"><path d="M8.2 1009.2 L15.6 1006.2 L20 1010.8 L12.8 1013.8 Z" fill="#2a62cc" stroke="#111" stroke-width="1.1" stroke-linejoin="round"/><path d="M12.4 1010 L16.4 1008.2 L18.8 1010.8 L13.6 1012.8 Z" fill="#58b868"/><path d="M4.6 1012 L8.2 1010.8 L11.8 1013 L7.1 1014.6 Z" fill="#b48c34" stroke="#111" stroke-width="1" stroke-linejoin="round"/><path d="M12.8 1014.4 L17.5 1013.6 L18.2 1015.5 L14.8 1017 Z" fill="#b48c34" stroke="#111" stroke-width="1" stroke-linejoin="round"/><path d="M6 1015.6 L9.6 1013.8 L13.8 1016.6 L10.9 1019.6 Z" fill="#e4e4e6" stroke="#111" stroke-width="1.1" stroke-linejoin="round"/></svg></div>
<div id="grip"></div>
<div class="tb" style="left:35px;top:1px;width:233px;height:22px;"><svg style="position:absolute;left:7px;top:4px" width="15" height="13" viewBox="0 0 15 13"><rect x="0.5" y="0.5" width="14" height="12" rx="1.5" fill="#a59a88" stroke="#55504a"/><rect x="1.5" y="1.5" width="12" height="1" fill="#d6d0c4"/><rect x="2" y="2" width="11" height="8" fill="#1d1f1d"/><rect x="3" y="3" width="9" height="6" fill="#585d58"/><rect x="4" y="7" width="3" height="1" fill="#e8e8e8"/></svg><span style="will-change:transform;position:absolute;left:29px;top:4px;line-height:16px;letter-spacing:.1px;white-space:nowrap">jyeung@stix:~/Desktop</span></div>
<svg class="ico" style="left:1257px;top:1px" width="24" height="24" viewBox="0 0 48 48">
<path d="M8.2 12 Q8 7 24 5 Q39 4.4 40 13 L37.6 38 Q30 42.6 24 41.6 L14.4 36.6 Z" fill="#140808" opacity=".8"/>
<path d="M10 18 L15.2 35.8 L24.4 40.6 Q30 41.2 36.6 37.4 L38.6 18 Z" fill="#d9d9db"/>
<path d="M10 18 L15.2 35.8 L24.4 40.6 L22 20 Z" fill="#efeff0"/>
<path d="M30 21 L38.6 18 L36.6 37.4 Q33 39.6 30 40.4 Z" fill="#bdbdc0"/>
<path d="M9 12.4 Q9 7.6 24 6 Q38 5.6 39.2 13.4 L38.8 19.6 Q32 24.4 22 23.4 Q12 21.6 9.8 17.6 Z" fill="#7ea6d2"/>
<path d="M10.4 12.4 Q11 8.8 24 7.4 Q36.6 7.2 37.8 13.2 Q37 17.6 24 18.8 Q12 17.6 10.4 12.4 Z" fill="#e8e8ea"/>
<path d="M11.6 12.6 Q13 9.6 24 8.6 Q35.6 8.6 36.6 13.2 Q35 16.4 24 17.6 Q13.6 16.6 11.6 12.6 Z" fill="#8a8a8e"/>
<path d="M14.6 10 L17.6 9.6 L16.6 18.4 L14 17.4 Z" fill="#fafafa"/>
<path d="M19.6 8 L36 13 L33.4 19.6 Q26 21.4 17.6 19.4 Z" fill="#1a1a1a"/>
<path d="M20.4 9.2 L35 13.6 L32.6 19.4 Q26 20.8 18.6 19.2 Z" fill="#f6f6f7"/>
<path d="M21 12 L33 15 M20.4 14 L32.4 16.8 M20 16 L31.6 18.4" stroke="#c6c6ca" stroke-width=".7"/>
<path d="M9.8 17.6 Q12 21.6 22 23.4 Q32 24.4 38.8 19.6 L39 16.6 Q32 21 22 20.4 Q12 18.6 9.4 14.6 Z" fill="#6f9bcb"/>
</svg>
<div id="ws">
<i class="wc" style="left:0"></i><i class="wc" style="left:26px"></i><i class="wc cur3" style="left:52px"></i><i class="wc" style="left:78px"></i>
<i class="ww" style="left:1px;top:1px;width:9px;height:6px"></i><i class="ww" style="left:11px;top:1px;width:13px;height:8px"></i><i class="ww" style="left:1px;top:8px;width:12px;height:5px"></i><i class="ww" style="left:12px;top:9px;width:13px;height:5px"></i>
<i class="ww" style="left:27px;top:1px;width:11px;height:3px"></i><i class="ww" style="left:39px;top:1px;width:13px;height:8px"></i><i class="ww" style="left:27px;top:3px;width:12px;height:10px"></i>
<i class="wa" style="left:57px;top:1px;width:21px;height:14px"></i>
</div>
</div>
<div id="win">
<div id="tbar"><div id="ttl">jyeung@stix:~/Desktop</div>
<svg class="ico" style="left:6px;top:5px" width="14" height="12" viewBox="0 0 15 13" preserveAspectRatio="none"><rect x="0.5" y="0.5" width="14" height="12" rx="1.5" fill="#b5a791" stroke="#5e5546"/><rect x="1.5" y="1.5" width="12" height="1" fill="#e6dfd2"/><rect x="2" y="2" width="11" height="8" fill="#1d1f1d"/><rect x="3" y="3" width="9" height="6" fill="#5c615c"/><rect x="4" y="7" width="3" height="1" fill="#e8e8e8"/><rect x="8" y="7.5" width="2" height="1" fill="#c8c8c8"/></svg>
<div class="wb" style="left:979px"><i style="left:4px;top:10px;width:8px;height:2px;background:#fff"></i></div>
<div class="wb" style="left:999px"><i style="left:4px;top:4px;width:8px;height:8px;border:1px solid #fff;border-top-width:2px"></i></div>
<div class="wb" style="left:1019px"><svg style="position:absolute;left:4px;top:4px" width="8" height="8" viewBox="0 0 8 8"><path d="M0.7 0.7 L7.3 7.3 M7.3 0.7 L0.7 7.3" stroke="#fff" stroke-width="2"/></svg></div>
</div>
<div id="menu">
<span class="mi" style="left:8px;letter-spacing:0px"><u>F</u>ile</span>
<span class="mi" style="left:42px;letter-spacing:0px"><u>E</u>dit</span>
<span class="mi" style="left:79px;letter-spacing:0.5px"><u>V</u>iew</span>
<span class="mi" style="left:124px;letter-spacing:0.42px"><u>T</u>erminal</span>
<span class="mi" style="left:192px;letter-spacing:0.5px">Ta<u>b</u>s</span>
<span class="mi" style="left:235px;letter-spacing:0.25px"><u>H</u>elp</span>
</div>
<div id="term"><pre>[jyeung@stix Desktop]$ 
[jyeung@stix Desktop]$ ls
control_file_wrfout   exportdata.gs~      <span class="r">mget6092(2).tar</span>  NetCDF2.nc        <span class="m">Screenshot-2.png</span>  TemplateTest~
control_file_wrfout~  extractprofile.gs   <span class="r">mget6092.tar</span>     NetCDF3.nc        <span class="m">Screenshot.png</span>
exportdata.gs         extractprofile.gs~  NetCDF1.nc       <span class="m">Screenshot-1.png</span>  TemplateTest
[jyeung@stix Desktop]$ ncdump NetCDF3.nc |more
netcdf NetCDF3 {
dimensions:
        lon = 1 ;
        lat = 1 ;
variables:
        double lon(lon) ;
                lon:long_name = "longitude coordinate" ;
                lon:standard_name = "longitude" ;
                lon:units = "degrees_east" ;
        double lat(lat) ;
                lat:long_name = "latitude coordinate" ;
                lat:standard_name = "latitude" ;
                lat:units = "degrees_north" ;
        float Project_apr14(lat, lon) ;
                Project_apr14:long_name = "Project_apr14" ;
                Project_apr14:esri_pe_string = "GEOGCS[\"GCS_WGS_1984\",DATUM[\"D_WGS_1984\",SPHEROID[\"WGS_1984\",6378137.0,29
8.257223563]],PRIMEM[\"Greenwich\",0.0],UNIT[\"Degree\",0.0174532925199433]]" ;
                Project_apr14:coordinates = "lon lat" ;
                Project_apr14:units = "Degree" ;
                Project_apr14:missing_value = -3.402823e+38f ;

// global attributes:
                :Conventions = "CF-1.0" ;
                :Source_Software = "ESRI ArcGIS" ;
data<span>:</span>

 lon = -53.6894300175222 ;

 lat = 61.6601833306093 ;

 Project_apr14 = 
  -3.402823e+38 ;
}
[jyeung@stix Desktop]$ <span class="cur"> </span></pre></div>
<div id="sb"><div class="b" style="top:0;border-bottom:1px solid #8a7a66"><svg style="position:absolute;left:3px;top:4px" width="7" height="4" viewBox="0 0 7 4"><path d="M0 4 L3.5 0 L7 4 Z" fill="#000"/></svg></div><div class="th"><svg style="position:absolute;left:3px;top:70px" width="7" height="8" viewBox="0 0 7 8"><path d="M0 0.5H7M0 3.5H7M0 6.5H7" stroke="#a3927d" stroke-width="1"/></svg></div><div class="b" style="top:667px"><svg style="position:absolute;left:3px;top:5px" width="7" height="4" viewBox="0 0 7 4"><path d="M0 0 L3.5 4 L7 0 Z" fill="#b5b0a8"/></svg></div></div>
</div>
</body>
</html>
